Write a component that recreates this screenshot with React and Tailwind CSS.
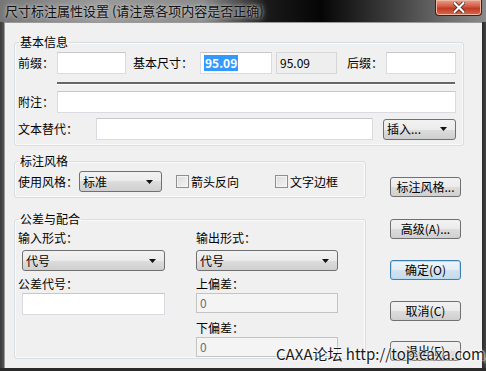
import React from "react";

const F = "font-['Noto_Sans_CJK_SC','Noto_Sans',sans-serif]";

function Arrow() {
  return (
    <svg width="7" height="4" viewBox="0 0 7 4" className="shrink-0">
      <polygon points="0,0 7,0 3.5,4" fill="#111" />
    </svg>
  );
}

function Combo({ className, children }) {
  return (
    <div
      className={
        "flex h-[21px] items-center justify-between rounded-[3px] border border-[#707070] bg-[linear-gradient(#f2f2f2,#ebebeb_50%,#dddddd_50%,#cfcfcf)] pl-[3px] pr-[8px] text-[12px] leading-[16px] text-black " +
        className
      }
    >
      <span>{children}</span>
      <Arrow />
    </div>
  );
}

function Btn({ children, focus, className = "" }) {
  return (
    <div
      className={
        (focus
          ? "border-[#3c7fb1] bg-[linear-gradient(#eef5fa,#e3edf5_50%,#d3e3ef_50%,#c8dbe9)] shadow-[inset_0_0_0_1px_#b4dcf3] "
          : "border-[#707070] bg-[linear-gradient(#f2f2f2,#ebebeb_50%,#dddddd_50%,#cfcfcf)] ") +
        "flex h-[20px] w-[71px] items-center justify-center rounded-[3px] border text-[12px] leading-[16px] text-black " +
        className
      }
    >
      {children}
    </div>
  );
}

function Input({ className = "", children }) {
  return (
    <div
      className={
        "flex h-[22px] items-center border border-[#d9dbe0] border-t-[#c5c7cc] bg-white px-[3px] text-[12px] " +
        className
      }
    >
      {children}
    </div>
  );
}

function Disabled({ className = "", children }) {
  return (
    <div
      className={
        "flex h-[20px] items-center border border-[#c4c4c4] bg-[#f4f4f4] px-[3px] text-[12px] leading-[16px] text-[#6d6d6d] " +
        className
      }
    >
      {children}
    </div>
  );
}

function Check({ className = "", children }) {
  return (
    <div className={"flex items-center " + className}>
      <span className="h-[13px] w-[13px] border border-[#8e8f8f] bg-[linear-gradient(135deg,#dcdcdc,#f4f4f4)] shadow-[inset_0_0_0_1px_#f4f4f4]" />
      <span className="ml-[2px] text-[12px] leading-[16px]">{children}</span>
    </div>
  );
}

function Legend({ children }) {
  return (
    <legend className="ml-[1px] px-[1px] text-[12px] leading-[16px] text-black">
      {children}
    </legend>
  );
}

export default function App() {
  return (
    <div
      className={
        "relative flex h-[371px] w-[486px] flex-col overflow-hidden bg-[#2e2e2e] text-black " +
        F
      }
    >
      {/* title bar */}
      <div className="flex h-[22px] items-center bg-[linear-gradient(90deg,#767676_0%,#9a9a9a_20%,#8a8a8a_42%,#1a1a1a_55%,#050505_66%,#3c3c3c_80%,#6e6e6e_92%,#8a8a8a_100%)] pl-[5px]">
        <span className="text-[13px] leading-[18px] text-[#111] [text-shadow:0_0_6px_#c8c8c8,0_0_3px_#c8c8c8]">
          尺寸标注属性设置 (请注意各项内容是否正确)
        </span>
      </div>
      <div className="absolute right-[4px] top-0 flex h-[16px] w-[47px] items-center justify-center rounded-b-[4px] border border-t-0 border-[#4a1a14] bg-[linear-gradient(#e8a08e,#d0573f_45%,#c23a22_55%,#d66b4d)] shadow-[inset_0_0_0_1px_#f0b6a4]">
        <svg width="12" height="11" viewBox="0 0 12 11">
          <path d="M1.5 1 L10.5 10 M10.5 1 L1.5 10" stroke="#3a1a12" strokeWidth="3.6" strokeLinecap="round" />
          <path d="M1.5 1 L10.5 10 M10.5 1 L1.5 10" stroke="#fff" strokeWidth="2.2" strokeLinecap="round" />
        </svg>
      </div>

      {/* body */}
      <div className="flex h-[346px]">
        <div className="w-[4px] bg-[linear-gradient(90deg,#3a3a3a,#555555)]" />
        <div className="flex w-[478px] flex-col border-l border-t border-[#9a9a9a] bg-[#f0f0f0] pl-[9px] pt-[11px]">
          {/* 基本信息 */}
          <fieldset className="w-[450px] rounded-[3px] border border-[#d5dfe5] px-[3px] pb-[5px] shadow-[inset_0_0_0_1px_#fafafa]">
            <Legend>基本信息</Legend>
            <div className="mt-[2px] flex items-center text-[12px] leading-[16px]">
              <span className="w-[39px]">前缀：</span>
              <Input className="w-[69px]" />
              <span className="ml-[7px] w-[67px]">基本尺寸：</span>
              <Input className="w-[72px] border-[#569de5] border-t-[#3d7bad]">
                <span className="bg-[#3399ff] px-[1px] font-semibold leading-[16px] text-white">
                  95.09
                </span>
              </Input>
              <div className="ml-[4px] flex h-[22px] w-[61px] items-center border border-[#d6d6d6] bg-[#eeeeee] px-[3px] text-[12px]">
                95.09
              </div>
              <span className="ml-[10px] w-[39px]">后缀：</span>
              <Input className="w-[70px]" />
            </div>
            <div className="ml-[39px] mt-[8px] h-[3px] w-[398px] border-b border-[#fdfdfd] bg-[#666666]" />
            <div className="mt-[6px] flex items-center text-[12px] leading-[16px]">
              <span className="w-[39px]">附注：</span>
              <Input className="w-[399px]" />
            </div>
            <div className="mt-[5px] flex items-center text-[12px] leading-[16px]">
              <span className="w-[78px]">文本替代：</span>
              <Input className="h-[21px] w-[277px]" />
              <Combo className="ml-[10px] w-[73px]">插入...</Combo>
            </div>
          </fieldset>

          <div className="mt-[7px] flex">
            <div className="flex w-[352px] flex-col">
              {/* 标注风格 */}
              <fieldset className="rounded-[3px] border border-[#d5dfe5] px-[3px] pb-[5px] shadow-[inset_0_0_0_1px_#fafafa]">
                <Legend>标注风格</Legend>
                <div className="mt-[2px] flex items-center text-[12px] leading-[16px]">
                  <span className="w-[61px]">使用风格：</span>
                  <Combo className="w-[83px]">标准</Combo>
                  <Check className="ml-[14px] w-[99px]">箭头反向</Check>
                  <Check>文字边框</Check>
                </div>
              </fieldset>

              {/* 公差与配合 */}
              <fieldset className="mt-[13px] rounded-[3px] border border-[#d5dfe5] px-[3px] pb-[1px] shadow-[inset_0_0_0_1px_#fafafa]">
                <Legend>公差与配合</Legend>
                <div className="flex text-[12px] leading-[16px]">
                  <div className="flex w-[178px] flex-col">
                    <span className="mt-[3px]">输入形式：</span>
                    <Combo className="ml-[4px] mt-[4px] w-[143px]">代号</Combo>
                    <span className="mt-[5px]">公差代号：</span>
                    <Input className="ml-[4px] mt-[1px] h-[20px] w-[143px]" />
                  </div>
                  <div className="flex w-[142px] flex-col">
                    <span className="mt-[3px]">输出形式：</span>
                    <Combo className="mt-[4px] w-[142px]">代号</Combo>
                    <span className="mt-[5px]">上偏差：</span>
                    <Disabled className="mt-[1px] w-[142px]">0</Disabled>
                    <span className="mt-[7px]">下偏差：</span>
                    <Disabled className="mt-[1px] w-[142px]">0</Disabled>
                  </div>
                </div>
              </fieldset>
            </div>

            <div className="ml-[24px] flex flex-col">
              <Btn className="mt-[24px]">标注风格...</Btn>
              <Btn className="mt-[22px]">高级(A)...</Btn>
              <Btn className="mt-[21px]" focus>
                确定(O)
              </Btn>
              <Btn className="mt-[21px]">取消(C)</Btn>
              <Btn className="mt-[20px]">退出(E)</Btn>
            </div>
          </div>
        </div>
        <div className="w-[4px] bg-[linear-gradient(90deg,#2a2a2a,#444444)]" />
      </div>
      <div className="h-[3px] bg-[#2a2a2a]" />

      {/* watermark */}
      <div className="pointer-events-none absolute left-[276px] top-[344px] whitespace-nowrap text-[15px] leading-[20px] text-[#1a1a1a] [text-shadow:0_0_2px_#fff,0_0_2px_#fff,0_0_3px_#fff]">
        CAXA论坛 http://top.caxa.com/
      </div>
    </div>
  );
}
